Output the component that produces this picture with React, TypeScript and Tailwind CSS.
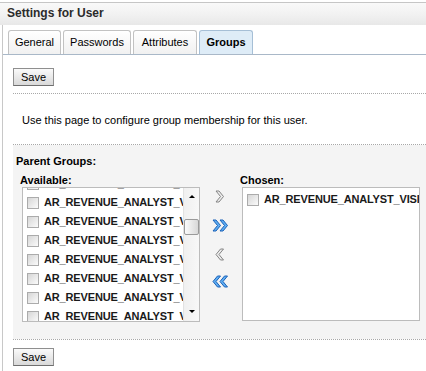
import React from "react";

const FONT = { fontFamily: '"Liberation Sans", Arial, sans-serif' };

function SaveButton() {
  return (
    <button className="block h-[18px] w-[41px] border border-[#8f8f8f] border-b-[#6f6f6f] bg-gradient-to-b from-[#fafafa] to-[#d9d9d9] text-[11px] leading-none text-black">
      Save
    </button>
  );
}

function Check() {
  return (
    <span className="inline-block h-[12px] w-[12px] shrink-0 border border-[#ababab] bg-gradient-to-br from-[#d6d6d6] to-[#fbfbfb]" />
  );
}

function Row({ name }: { name: string }) {
  return (
    <div className="flex h-[19px] items-center gap-[5px] whitespace-nowrap pl-[4px] text-[11px] font-bold tracking-[-0.15px] text-[#1a1a1a]">
      <Check />
      <span>{name}</span>
    </div>
  );
}

function Chevron({ dir, color }: { dir: "right" | "left"; color: "gray" | "blue" }) {
  const fill = color === "gray" ? "#ececec" : "#5eaef2";
  const stroke = color === "gray" ? "#858585" : "#1d62b8";
  const double = color === "blue";
  const one = dir === "right" ? "1,1 4,1 8.5,6.5 4,12 1,12 5.5,6.5" : "8.5,1 5.5,1 1,6.5 5.5,12 8.5,12 4,6.5";
  return (
    <svg width={double ? 17 : 10} height={13} viewBox={double ? "0 0 17 13" : "0 0 10 13"}>
      <polygon points={one} fill={fill} stroke={stroke} strokeWidth={1} strokeLinejoin="round" />
      {double && (
        <polygon
          points={one}
          transform="translate(7 0)"
          fill={fill}
          stroke={stroke}
          strokeWidth={1}
          strokeLinejoin="round"
        />
      )}
    </svg>
  );
}

const available = Array.from({ length: 8 }, () => "AR_REVENUE_ANALYST_VISION_OPERATIONS");

export default function App() {
  return (
    <div className="h-[371px] w-[426px] overflow-hidden bg-white pt-[2px]" style={FONT}>
      {/* title bar */}
      <div className="h-[23px] border-t border-[#c6c6c6] bg-gradient-to-b from-[#f9f9f9] via-[#f2f2f2] to-[#e8e8e8] pl-[7px] text-[12px] font-bold leading-[21px] text-[#2b2b2b]">
        Settings for User
      </div>

      <div className="ml-[2px] h-full border-l border-[#c8c8c8]">
        {/* tabs */}
        <div className="flex items-end gap-[2px] border-b border-[#a9b8c8] pl-[5px] pt-[5px]">
          {["General", "Passwords", "Attributes"].map((t, i) => (
            <div
              key={t}
              className={`flex h-[24px] items-center justify-center rounded-t-[3px] border border-b-0 border-[#c2c2c2] bg-gradient-to-b from-white to-[#f1f1f1] text-[11px] text-black ${
                i === 0 ? "w-[53px]" : i === 1 ? "w-[68px]" : "w-[64px]"
              }`}
            >
              {t}
            </div>
          ))}
          <div className="flex h-[24px] w-[54px] items-center justify-center rounded-t-[3px] border border-b-0 border-[#a6bfd6] bg-[#deecf7] text-[11px] font-bold text-black">
            Groups
          </div>
        </div>

        <div className="flex pl-[10px] pt-[13px]">
          <SaveButton />
        </div>
        <div className="ml-[10px] mt-[7px] border-t border-dotted border-[#a8a8a8]" />

        <p className="ml-[19px] mt-[19px] text-[11px] leading-[14px] text-black">
          Use this page to configure group membership for this user.
        </p>
        <div className="ml-[10px] mt-[17px] border-t border-dotted border-[#a8a8a8]" />

        {/* shuttle */}
        <div className="ml-[10px] h-[194px] bg-[#f4f4f4] pl-[3px] pt-[9px]">
          <div className="text-[11px] font-bold leading-[14px] text-black">Parent Groups:</div>
          <div className="mt-[5px] flex">
            <div className="ml-[4px]">
              <div className="text-[11px] font-bold leading-[14px] text-black">Available:</div>
              <div className="ml-[2px] flex h-[135px] w-[178px] border border-[#bcbcbc] bg-white">
                <div className="flex-1 overflow-hidden">
                  <div className="-mt-[14px]">
                    {available.map((n, i) => (
                      <Row key={i} name={n} />
                    ))}
                  </div>
                </div>
                <div className="relative w-[16px] border-l border-[#e2e2e2] bg-gradient-to-r from-[#f0f0f0] to-[#f8f8f8]">
                  <span className="absolute left-[5px] top-[7px] h-0 w-0 border-x-[3px] border-b-[3px] border-x-transparent border-b-black" />
                  <span className="absolute left-0 top-[31px] h-[16px] w-[15px] rounded-[2px] border border-[#9a9a9a] bg-gradient-to-r from-[#fbfbfb] to-[#d8d8d8]" />
                  <span className="absolute bottom-[8px] left-[5px] h-0 w-0 border-x-[3px] border-t-[3px] border-x-transparent border-t-black" />
                </div>
              </div>
            </div>

            <div className="flex w-[40px] flex-col items-center pt-[17px]">
              <div className="flex h-[28px] items-start justify-center">
                <Chevron dir="right" color="gray" />
              </div>
              <div className="flex h-[28px] items-start justify-center pt-[1px]">
                <Chevron dir="right" color="blue" />
              </div>
              <div className="flex h-[28px] items-start justify-center pt-[2px]">
                <Chevron dir="left" color="gray" />
              </div>
              <div className="flex h-[28px] items-start justify-center pt-[1px]">
                <Chevron dir="left" color="blue" />
              </div>
            </div>

            <div>
              <div className="text-[11px] font-bold leading-[14px] text-black">Chosen:</div>
              <div className="ml-[2px] h-[134px] w-[178px] overflow-hidden border border-[#bcbcbc] bg-white pt-[2px]">
                <Row name="AR_REVENUE_ANALYST_VISION_OPERATIONS" />
              </div>
            </div>
          </div>
        </div>
        <div className="ml-[10px] border-t border-dotted border-[#a8a8a8]" />

        <div className="flex pl-[10px] pt-[8px]">
          <SaveButton />
        </div>
      </div>
    </div>
  );
}
